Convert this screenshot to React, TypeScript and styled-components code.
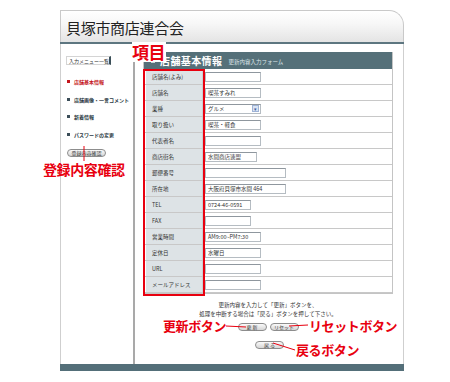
import React from 'react';
import styled, { createGlobalStyle } from 'styled-components';

const GlobalStyle = createGlobalStyle`
  html, body {
    margin: 0;
    padding: 0;
    background: #ffffff;
  }
  body {
    font-family: "Noto Sans CJK JP", "Liberation Sans", sans-serif;
    color: #333;
  }
`;

const Page = styled.div`
  position: relative;
  width: 450px;
  height: 382px;
  padding: 10px 0 0 60px;
  box-sizing: border-box;
  overflow: hidden;
`;

const Frame = styled.div`
  width: 344px;
  display: flex;
  flex-direction: column;
`;

const Header = styled.div`
  height: 32px;
  box-sizing: border-box;
  border: 1px solid #c9c9c9;
  border-bottom: none;
  border-top-right-radius: 15px;
  background: linear-gradient(#ffffff 0%, #f7f7f7 40%, #e4e4e4 100%);
  display: flex;
  align-items: center;
  padding: 2px 0 0 5px;
  font-size: 15px;
  color: #222;
  letter-spacing: -0.3px;
`;

const HeaderRule = styled.div`
  height: 2px;
  background: #5d7680;
`;

const Body = styled.div`
  height: 320px;
  display: grid;
  grid-template-columns: 72px 2px 1fr;
  border-left: 1px solid #cfcfcf;
  border-right: 1px solid #cfcfcf;
`;

const Sidebar = styled.div`
  padding: 12px 0 0 5px;
  display: flex;
  flex-direction: column;
  align-items: flex-start;
`;

const MenuHeading = styled.div`
  width: 40px;
  height: 7px;
  font-size: 5px;
  line-height: 7px;
  padding-left: 2px;
  border: 1px solid #d4d4d4;
  border-right: 2px solid #3b4f58;
  color: #333;
  white-space: nowrap;
  margin-bottom: 8px;
`;

const MenuItem = styled.div<{ $active?: boolean }>`
  display: flex;
  align-items: center;
  gap: 4px;
  height: 17.5px;
  font-size: 5px;
  font-weight: 700;
  color: ${p => (p.$active ? '#c4161c' : '#2c3a44')};
  white-space: nowrap;
  padding-left: 1px;

  &::before {
    content: '';
    width: 3px;
    height: 3px;
    background: ${p => (p.$active ? '#c4161c' : '#3b4d58')};
  }
`;

const PillButton = styled.div<{ $w: number }>`
  width: ${p => p.$w}px;
  height: 8px;
  box-sizing: border-box;
  border: 1px solid #8d8d8d;
  border-radius: 4px;
  background: linear-gradient(#fafafa, #d6d6d6);
  font-size: 5px;
  line-height: 6px;
  text-align: center;
  color: #333;
  white-space: nowrap;
`;

const SideButtonWrap = styled.div`
  margin-top: 6px;
  margin-left: 1px;
`;

const Divider = styled.div`
  background: #a9a9a9;
`;

const Content = styled.div`
  padding: 8px 10px 0 8px;
  display: flex;
  flex-direction: column;
`;

const Section = styled.div`
  border: 1px solid #c4c4c4;
  border-top: none;
`;

const SectionHead = styled.div`
  height: 17px;
  background: #557079;
  display: flex;
  align-items: center;
  gap: 3px;
  padding-left: 7px;
  color: #fff;
`;

const HeadIcon = styled.span`
  width: 4px;
  height: 4px;
  background: #c9d3d7;
  margin-top: 1px;
`;

const HeadTitle = styled.span`
  font-size: 10px;
  font-weight: 700;
  letter-spacing: 0.4px;
  margin-left: 2px;
`;

const HeadSub = styled.span`
  font-size: 5.5px;
  color: #dde6ea;
  margin-left: 3px;
  margin-top: 2px;
`;

const Row = styled.div`
  height: 16px;
  box-sizing: border-box;
  display: grid;
  grid-template-columns: 57px 1fr;
  border-bottom: 1px solid #c8c8c8;
  padding-left: 2px;
`;

const Label = styled.div`
  background: #dde3e6;
  border-right: 1px solid #c9d0d3;
  font-size: 5.5px;
  color: #333;
  display: flex;
  align-items: center;
  padding-left: 6px;
  white-space: nowrap;
`;

const Cell = styled.div`
  display: flex;
  align-items: center;
  padding-left: 2px;
`;

const Field = styled.div<{ $w: number }>`
  width: ${p => p.$w}px;
  height: 10px;
  box-sizing: border-box;
  border: 1px solid #b5bcc2;
  border-top-color: #8f979e;
  background: #fff;
  font-size: 5.5px;
  line-height: 8px;
  padding-left: 2px;
  color: #333;
  white-space: nowrap;
  display: flex;
  justify-content: space-between;
  align-items: center;
`;

const SelectArrow = styled.span`
  width: 7px;
  height: 7px;
  margin-right: 1px;
  background: #d9e3f3;
  border: 1px solid #9fb3d6;
  box-sizing: border-box;
  display: flex;
  align-items: center;
  justify-content: center;
  font-size: 5px;
  color: #3a5aa0;
`;

const Notes = styled.div`
  margin-top: 7px;
  font-size: 5.5px;
  line-height: 9px;
  text-align: center;
  color: #333;
`;

const ButtonRow = styled.div<{ $mt: number }>`
  margin-top: ${p => p.$mt}px;
  display: flex;
  justify-content: center;
  gap: 3px;
  padding-left: ${p => (p.$mt > 5 ? 3 : 0)}px;
`;

const Footer = styled.div`
  height: 7px;
  background: #546f79;
`;

const Callout = styled.div<{ $x: number; $y: number; $size: number }>`
  position: absolute;
  left: ${p => p.$x}px;
  top: ${p => p.$y}px;
  font-size: ${p => p.$size}px;
  line-height: 1;
  font-weight: 700;
  color: #e8000f;
  white-space: nowrap;
  letter-spacing: -0.4px;
`;

const HeadCallout = styled(Callout)`
  background: #fff;
  padding: 1px 1px 2px 0;
`;

const RedBox = styled.div`
  position: absolute;
  left: 143px;
  top: 69px;
  width: 62px;
  height: 227px;
  box-sizing: border-box;
  border: 2px solid #e8000f;
`;

const Leaders = styled.svg`
  position: absolute;
  left: 0;
  top: 0;
  pointer-events: none;
`;

const rows: { label: string; value?: string; w: number; select?: boolean }[] = [
  { label: '店舗名(よみ)', w: 56 },
  { label: '店舗名', value: '喫茶すみれ', w: 56 },
  { label: '業種', value: 'グルメ', w: 56, select: true },
  { label: '取り扱い', value: '喫茶・軽食', w: 56 },
  { label: '代表者名', w: 56 },
  { label: '商店街名', value: '水間商店連盟', w: 52 },
  { label: '郵便番号', w: 81 },
  { label: '所在地', value: '大阪府貝塚市水間 464', w: 81 },
  { label: 'TEL', value: '0724-46-0591', w: 46 },
  { label: 'FAX', w: 46 },
  { label: '営業時間', value: 'AM9:00~PM7:30', w: 56 },
  { label: '定休日', value: '水曜日', w: 56 },
  { label: 'URL', w: 56 },
  { label: 'メールアドレス', w: 56 },
];

const App: React.FC = () => {
  return (
    <Page>
      <GlobalStyle />
      <Frame>
        <Header>貝塚市商店連合会</Header>
        <HeaderRule />
        <Body>
          <Sidebar>
            <MenuHeading>入力メニュー一覧</MenuHeading>
            <MenuItem $active>店舗基本情報</MenuItem>
            <MenuItem>店舗画像・一言コメント</MenuItem>
            <MenuItem>新着情報</MenuItem>
            <MenuItem>パスワードの変更</MenuItem>
            <SideButtonWrap>
              <PillButton $w={39}>登録内容確認</PillButton>
            </SideButtonWrap>
          </Sidebar>
          <Divider />
          <Content>
            <Section>
              <SectionHead>
                <HeadIcon />
                <HeadTitle>店舗基本情報</HeadTitle>
                <HeadSub>更新内容入力フォーム</HeadSub>
              </SectionHead>
              {rows.map(r => (
                <Row key={r.label}>
                  <Label>{r.label}</Label>
                  <Cell>
                    <Field $w={r.w}>
                      {r.value ?? ''}
                      {r.select && <SelectArrow>▾</SelectArrow>}
                    </Field>
                  </Cell>
                </Row>
              ))}
            </Section>
            <Notes>
              更新内容を入力して「更新」ボタンを、
              <br />
              処理を中断する場合は「戻る」ボタンを押して下さい。
            </Notes>
            <ButtonRow $mt={4}>
              <PillButton $w={29}>更 新</PillButton>
              <PillButton $w={29}>リセット</PillButton>
            </ButtonRow>
            <ButtonRow $mt={10}>
              <PillButton $w={29}>戻 る</PillButton>
            </ButtonRow>
          </Content>
        </Body>
        <Footer />
      </Frame>

      <RedBox />
      <HeadCallout $x={132} $y={42} $size={17}>項目</HeadCallout>
      <Callout $x={43} $y={162} $size={14}>登録内容確認</Callout>
      <Callout $x={163} $y={319} $size={13}>更新ボタン</Callout>
      <Callout $x={309} $y={319} $size={13}>リセットボタン</Callout>
      <Callout $x={296} $y={343} $size={13}>戻るボタン</Callout>
      <Leaders width={450} height={382}>
        <g stroke="#e8000f" strokeWidth={1} fill="none">
          <line x1={84} y1={146} x2={84} y2={161} />
          <line x1={226} y1={326} x2={246} y2={327} />
          <line x1={289} y1={326} x2={308} y2={325} />
          <line x1={273} y1={343} x2={295} y2={350} />
        </g>
      </Leaders>
    </Page>
  );
};

export default App;
